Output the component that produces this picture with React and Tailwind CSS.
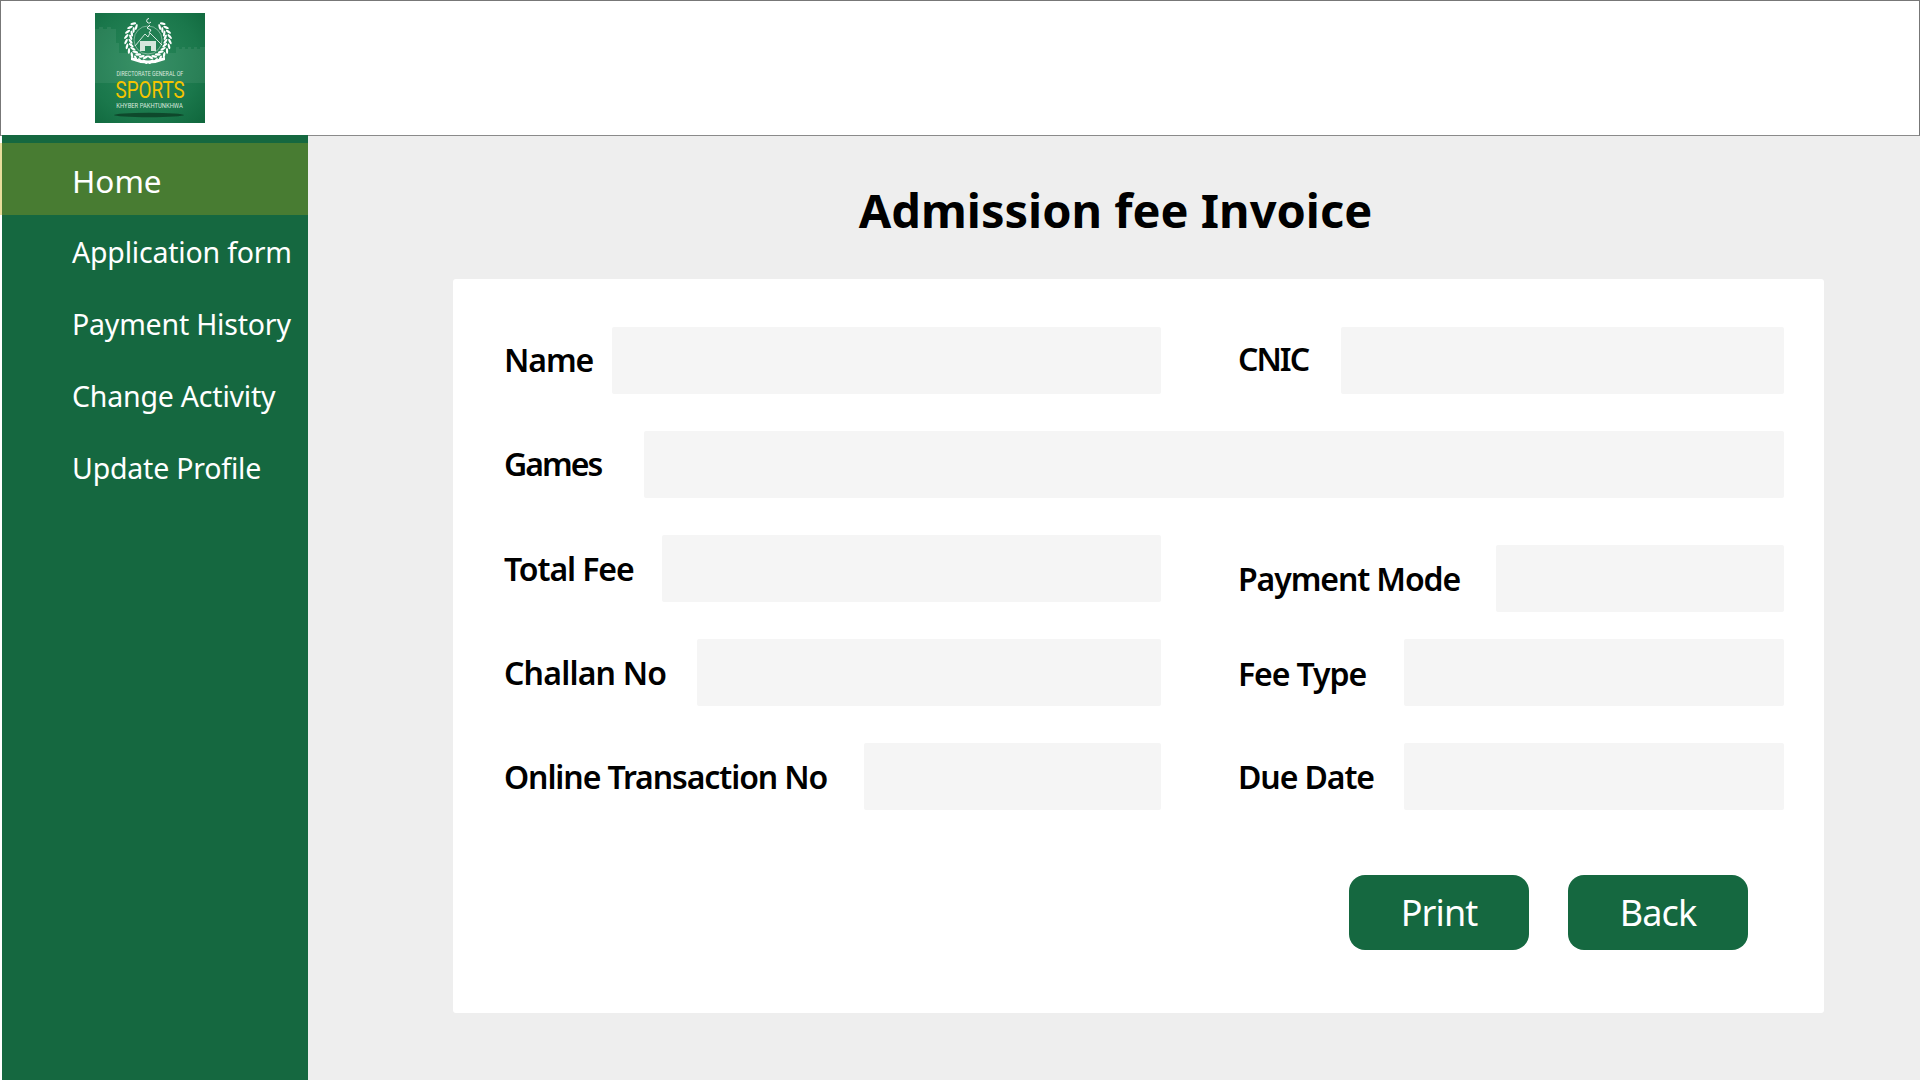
const navItems = ['Home', 'Application form', 'Payment History', 'Change Activity', 'Update Profile'];

// wreath leaves, mirrored around the emblem centre
const leaves = [];
for (let a = 98; a <= 232; a += 13) {
  const rad = (a * Math.PI) / 180;
  [17.5, 22].forEach((r, i) => {
    const x = r * Math.cos(rad);
    const y = r * Math.sin(rad);
    const rot = a + 90 + (i === 0 ? -32 : 32);
    leaves.push({ x: 53 + x, y: 27 + y, rot });
    leaves.push({ x: 53 - x, y: 27 + y, rot: 180 - rot });
  });
}

function Logo() {
  return (
    <div className="relative w-[110px] h-[110px] bg-[radial-gradient(circle_at_45%_45%,#2a8a5c_0%,#1a774b_65%,#0f663c_100%)] overflow-hidden flex flex-col items-center">
      <svg viewBox="0 0 110 110" className="absolute inset-0 w-full h-full">
        {/* fort silhouette behind the emblem */}
        <path d="M0 16h4v-2h4v2h4v-2h4v2h5v14h3v10h8v-2h3v2h46v-6h3v2h3v-2h3v2h3v-2h3v2h3v-2h3v2h3v-2h5v36H0z" fill="#ffffff" opacity="0.07" />
        <ellipse cx="54" cy="102" rx="35" ry="2.2" fill="#0b3a22" opacity="0.75" />
        {leaves.map((l, i) => (
          <ellipse key={i} cx={l.x} cy={l.y} rx="3" ry="1.15" fill="#ffffff" transform={`rotate(${l.rot} ${l.x} ${l.y})`} />
        ))}
        <circle cx="53" cy="27" r="14" fill="none" stroke="#d5e7dc" strokeWidth="0.5" />
        <path d="M40 33l10-12 3 3 2-4 12 12" fill="none" stroke="#ffffff" strokeWidth="0.8" />
        <path d="M45 28h16v10h-5v-5h-6v5h-5z" fill="#d5e7dc" />
        <path d="M54 5.5a2.3 2.3 0 1 0 2 3.4M55 12l-3 3 4 2-2 3" fill="none" stroke="#ffffff" strokeWidth="0.9" />
        <path d="M36 44q17 7 34 0v3q-17 7-34 0z" fill="#ffffff" />
      </svg>
      <div className="relative mt-[57px] h-[8px] text-[8px] leading-[8px] text-[#d9e8de] font-['Roboto',sans-serif] [transform:scaleX(0.67)] whitespace-nowrap">DIRECTORATE GENERAL OF</div>
      <div className="relative mt-[1px] h-[22px] text-[24px] leading-[22px] text-[#f5c400] font-['Roboto',sans-serif] [transform:scaleX(0.785)] whitespace-nowrap">SPORTS</div>
      <div className="relative mt-[1px] h-[8px] text-[7.5px] leading-[8px] text-[#d9e8de] font-['Roboto',sans-serif] [transform:scaleX(0.78)] whitespace-nowrap">KHYBER PAKHTUNKHWA</div>
    </div>
  );
}

function Field({ label, labelClass, inputClass }) {
  return (
    <div className="flex items-center h-[67px]">
      <span className={`text-[32px] font-semibold text-black whitespace-nowrap tracking-[-1.1px] ${labelClass}`}>{label}</span>
      <div className={`h-[67px] bg-[#f5f5f5] rounded-[2px] ${inputClass}`} />
    </div>
  );
}

export default function App() {
  return (
    <div className="w-[1920px] h-[1080px] overflow-hidden flex flex-col bg-white font-['Noto_Sans',sans-serif]">
      {/* Header */}
      <header className="h-[136px] shrink-0 bg-white border border-[#777777] border-b-[#8a8a8a] pl-[94px] pt-3">
        <Logo />
      </header>

      <div className="flex flex-1 min-h-0">
        {/* Sidebar */}
        <aside className="w-[306px] shrink-0 ml-[2px] -mt-px bg-[#156840] pt-2">
          {navItems.map((item, i) => (
            <div
              key={item}
              className={`h-[72px] flex items-center text-white whitespace-nowrap ${
                i === 0
                  ? '-ml-[2px] pl-[70px] border-l-2 border-[#e9dd9c] bg-[#487c32] text-[31.5px] pt-1'
                  : 'pl-[70px] text-[28.5px] tracking-[-0.2px] pt-[2px]'
              }`}
            >
              {item}
            </div>
          ))}
        </aside>

        {/* Main */}
        <main className="flex-1 min-w-0 pl-[145px] bg-[#eeeeee]">
          <h1 className="w-[1325px] mt-[45px] text-center text-[47px] leading-[58px] font-bold text-black whitespace-nowrap">Admission fee Invoice</h1>
          <section className="w-[1371px] h-[734px] mt-[40px] bg-white rounded-[3px] pt-[48px] pl-[51px] pr-[40px]">
            <div className="flex">
              <Field label="Name" labelClass="w-[108px] -mt-[2px]" inputClass="w-[549px]" />
              <Field label="CNIC" labelClass="w-[103px] ml-[77px] -mt-[4px] tracking-[-2px]!" inputClass="w-[443px]" />
            </div>
            <div className="mt-[37px]">
              <Field label="Games" labelClass="w-[140px] -mt-[2px] tracking-[-2px]!" inputClass="w-[1140px]" />
            </div>
            <div className="flex mt-[37px]">
              <Field label="Total Fee" labelClass="w-[158px]" inputClass="w-[499px]" />
              <div className="ml-[77px] mt-[10px]">
                <Field label="Payment Mode" labelClass="w-[258px]" inputClass="w-[288px]" />
              </div>
            </div>
            <div className="flex mt-[27px]">
              <Field label="Challan No" labelClass="w-[193px] tracking-[-0.8px]!" inputClass="w-[464px]" />
              <Field label="Fee Type" labelClass="w-[166px] ml-[77px] mt-[2px]" inputClass="w-[380px]" />
            </div>
            <div className="flex mt-[37px]">
              <Field label="Online Transaction No" labelClass="w-[360px]" inputClass="w-[297px]" />
              <Field label="Due Date" labelClass="w-[166px] ml-[77px]" inputClass="w-[380px]" />
            </div>
            <div className="flex justify-end gap-[39px] mt-[65px] pr-[36px]">
              <button className="w-[180px] h-[75px] pt-px rounded-[16px] bg-[#156840] text-white text-[36px] tracking-[-0.9px]">Print</button>
              <button className="w-[180px] h-[75px] pt-px rounded-[16px] bg-[#156840] text-white text-[36px] tracking-[-0.9px]">Back</button>
            </div>
          </section>
        </main>
      </div>
    </div>
  );
}
